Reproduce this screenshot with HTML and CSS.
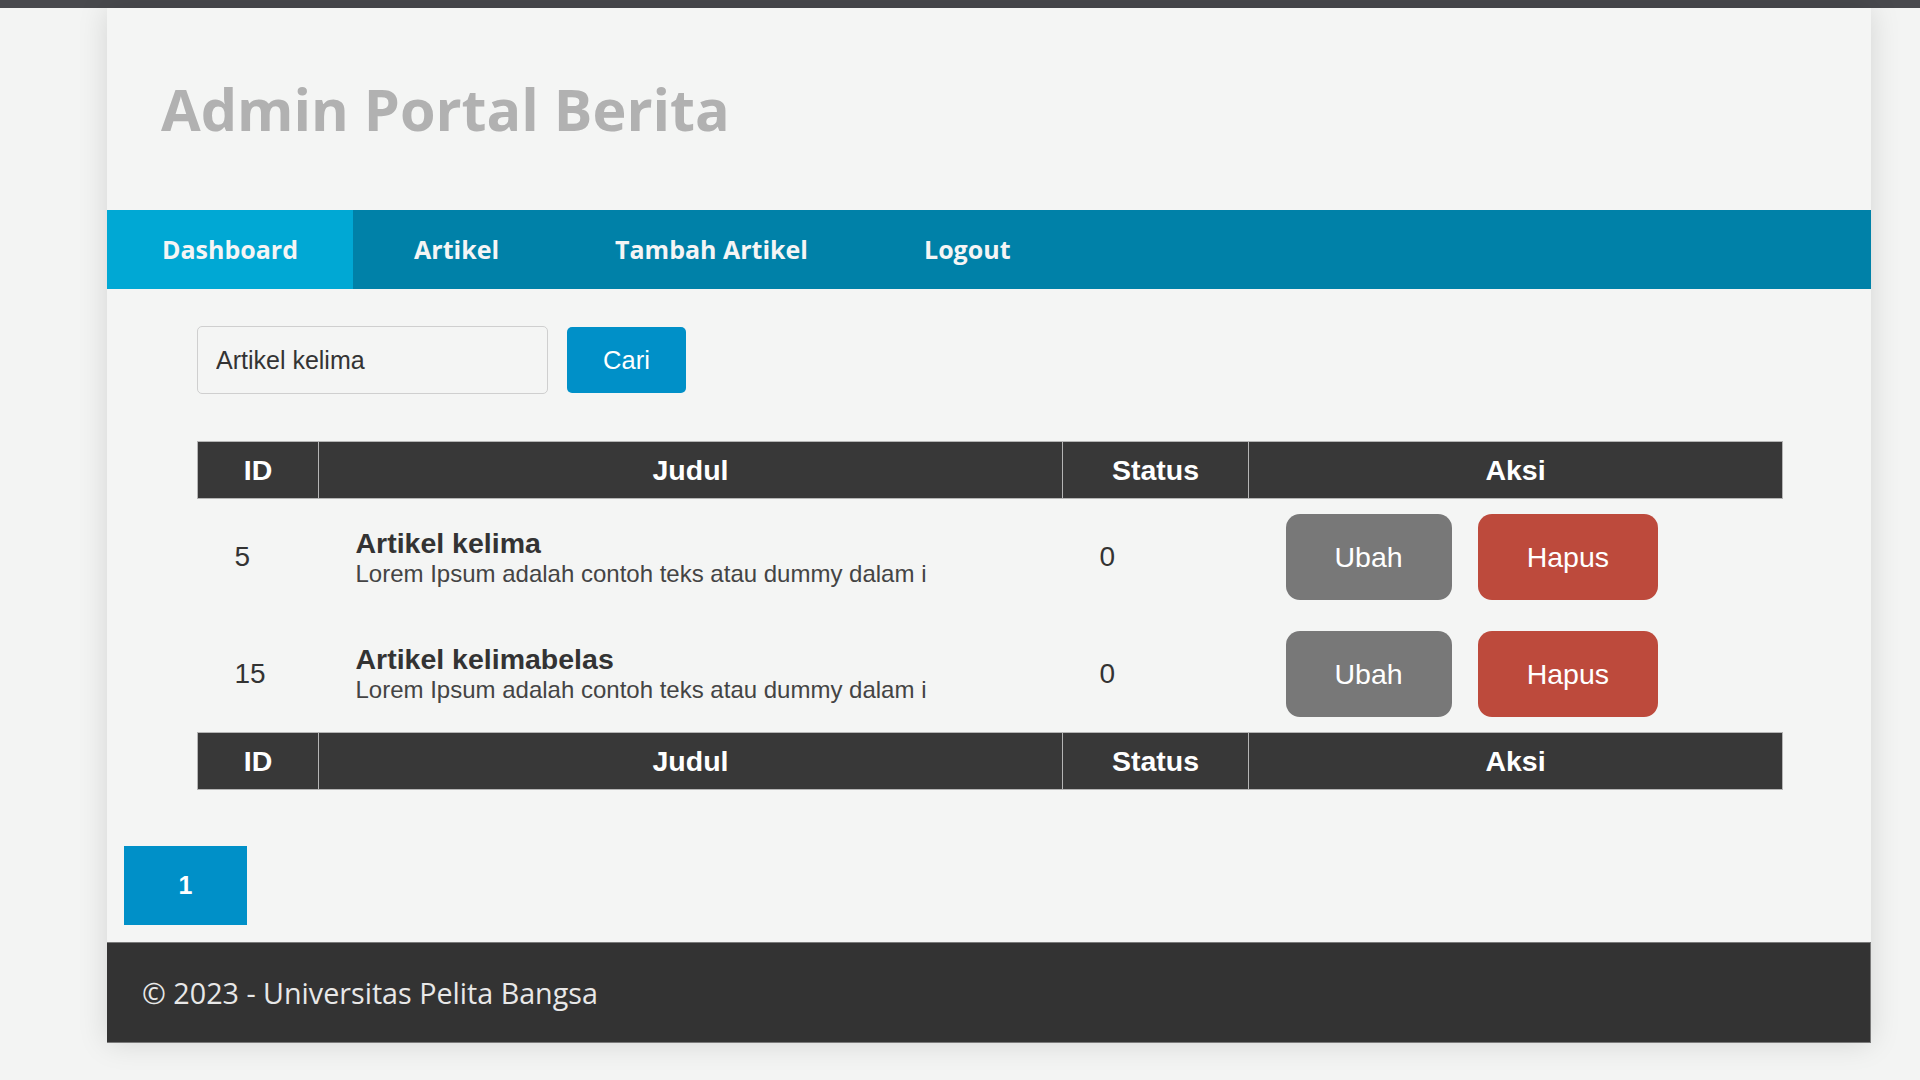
FILE: index.html
```html
<!DOCTYPE html>
<html lang="id">
<head>
<meta charset="utf-8">
<title>Admin Portal Berita</title>
<link rel="stylesheet" href="styles.css">
</head>
<body>
<div class="topbar"></div>
<div class="container">
  <header class="site-header">
    <h1 class="site-title">Admin Portal Berita</h1>
  </header>
  <nav class="main-nav">
    <a class="nav-item active" href="#">Dashboard</a>
    <a class="nav-item" href="#">Artikel</a>
    <a class="nav-item" href="#">Tambah Artikel</a>
    <a class="nav-item" href="#">Logout</a>
  </nav>
  <main class="content">
    <form class="search-form">
      <input class="search-input" type="text" value="Artikel kelima">
      <button class="search-btn" type="button">Cari</button>
    </form>
    <table class="data-table">
      <colgroup>
        <col class="col-id">
        <col class="col-judul">
        <col class="col-status">
        <col class="col-aksi">
      </colgroup>
      <thead>
        <tr><th>ID</th><th>Judul</th><th>Status</th><th>Aksi</th></tr>
      </thead>
      <tbody>
        <tr>
          <td>5</td>
          <td>
            <div class="art-title">Artikel kelima</div>
            <p class="art-desc">Lorem Ipsum adalah contoh teks atau dummy dalam i</p>
          </td>
          <td>0</td>
          <td>
            <div class="actions">
              <a class="btn btn-ubah" href="#">Ubah</a>
              <a class="btn btn-hapus" href="#">Hapus</a>
            </div>
          </td>
        </tr>
        <tr>
          <td>15</td>
          <td>
            <div class="art-title">Artikel kelimabelas</div>
            <p class="art-desc">Lorem Ipsum adalah contoh teks atau dummy dalam i</p>
          </td>
          <td>0</td>
          <td>
            <div class="actions">
              <a class="btn btn-ubah" href="#">Ubah</a>
              <a class="btn btn-hapus" href="#">Hapus</a>
            </div>
          </td>
        </tr>
      </tbody>
      <tfoot>
        <tr><th>ID</th><th>Judul</th><th>Status</th><th>Aksi</th></tr>
      </tfoot>
    </table>
    <div class="pagination">
      <a class="page-link" href="#">1</a>
    </div>
  </main>
  <footer class="site-footer">
    <p class="footer-text">&copy; 2023 - Universitas Pelita Bangsa</p>
  </footer>
</div>
</body>
</html>
```

FILE: styles.css
```css
* { box-sizing: border-box; }

html, body {
  margin: 0;
  padding: 0;
}

body {
  background: #f3f4f3;
  font-family: "Liberation Sans", Arial, sans-serif;
  color: #333;
  height: 1080px;
  overflow: hidden;
}

.topbar {
  height: 8px;
  background: #48494d;
}

.container {
  margin-left: 107px;
  width: 1764px;
  background: #f4f5f4;
  box-shadow: 0 0 28px rgba(0, 0, 0, 0.13);
}

.site-header {
  height: 202px;
  padding: 61px 0 0 54px;
}

.site-title {
  margin: 0;
  font-family: "Open Sans", sans-serif;
  font-weight: 700;
  font-size: 57.5px;
  line-height: 80px;
  color: #b1b1b1;
}

.main-nav {
  display: flex;
  gap: 6px;
  height: 79px;
  background: #0081a8;
}

.nav-item {
  display: block;
  padding: 0 55px;
  line-height: 79px;
  font-family: "Open Sans", sans-serif;
  font-weight: 700;
  font-size: 25px;
  color: #f5f5f5;
  text-decoration: none;
}

.nav-item.active {
  background: #00a8d4;
}

.content {
  padding: 37px 0 17px;
}

.search-form {
  display: flex;
  align-items: center;
  gap: 19px;
  margin: 0 0 47px 90px;
}

.search-input {
  width: 351px;
  height: 68px;
  padding: 0 0 0 18px;
  border: 1.5px solid #cfcfcf;
  border-radius: 5px;
  background: #f4f5f4;
  font-family: "Liberation Sans", Arial, sans-serif;
  font-size: 25px;
  color: #333;
  outline: none;
}

.search-btn {
  width: 119px;
  height: 66px;
  border: none;
  border-radius: 5px;
  background: #0090c8;
  color: #fff;
  font-family: "Liberation Sans", Arial, sans-serif;
  font-size: 25.5px;
  padding: 0;
}

.data-table {
  margin: 0 90px;
  width: 1585px;
  border-collapse: collapse;
  table-layout: fixed;
}

.col-id { width: 121px; }
.col-judul { width: 744px; }
.col-status { width: 186px; }
.col-aksi { width: 534px; }

.data-table th {
  height: 57px;
  padding: 0;
  background: #383838;
  border: 1px solid #b5b5b5;
  color: #fff;
  font-size: 28.5px;
  font-weight: 700;
  text-align: center;
}

.data-table td {
  height: 117px;
  padding: 0 37px;
  vertical-align: middle;
  text-align: left;
  font-size: 28px;
  color: #333;
}

.art-title {
  font-weight: 700;
  font-size: 28.5px;
  color: #333;
}

.art-desc {
  margin: 0;
  font-size: 24px;
  color: #444;
}

.actions {
  display: flex;
  gap: 26px;
}

.btn {
  display: block;
  height: 86px;
  line-height: 86px;
  padding: 0 49px;
  border-radius: 14px;
  color: #fff;
  font-size: 28.5px;
  text-decoration: none;
}

.btn-ubah { background: #787878; }
.btn-hapus { background: #bd4a3c; }

.pagination {
  margin: 56px 0 0 17px;
  display: flex;
}

.page-link {
  display: block;
  width: 123px;
  height: 79px;
  line-height: 79px;
  text-align: center;
  background: #0090c8;
  color: #fff;
  font-weight: 700;
  font-size: 25px;
  text-decoration: none;
}

.site-footer {
  height: 101px;
  background: #333;
  border: 1px solid #7a7a7a;
  border-left: none;
  padding-left: 35px;
  display: flex;
  align-items: center;
}

.footer-text {
  margin: 0;
  font-family: "Open Sans", sans-serif;
  font-size: 28.7px;
  color: #e8e8e8;
}
```
